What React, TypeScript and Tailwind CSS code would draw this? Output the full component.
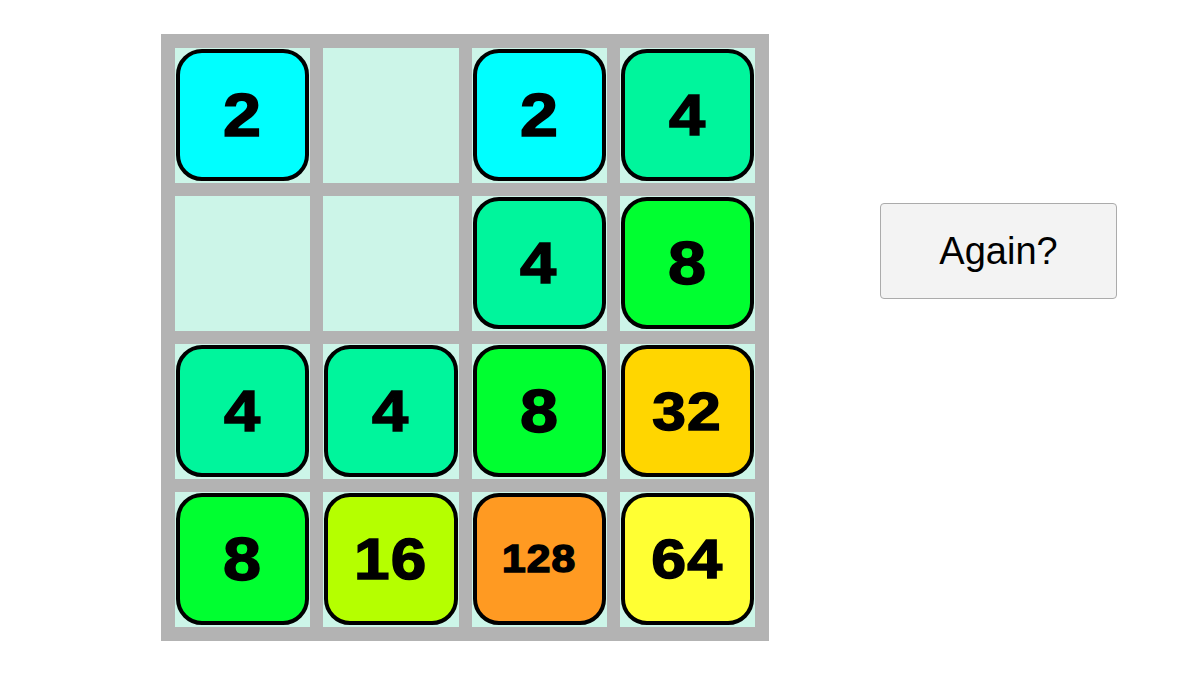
import React from 'react'

type Tile = { v: number | null }

const board: (number | null)[][] = [
  [2, null, 2, 4],
  [null, null, 4, 8],
  [4, 4, 8, 32],
  [8, 16, 128, 64],
]

const tileBg: Record<number, string> = {
  2: 'bg-[#00ffff]',
  4: 'bg-[#00f59c]',
  8: 'bg-[#00ff30]',
  16: 'bg-[#b5ff00]',
  32: 'bg-[#ffd600]',
  64: 'bg-[#ffff33]',
  128: 'bg-[#ff9a22]',
}

const tileText: Record<number, string> = {
  2: 'text-[61px]',
  4: 'text-[58px]',
  8: 'text-[61px]',
  16: 'text-[57px]',
  32: 'text-[54px]',
  64: 'text-[56px]',
  128: 'text-[38px]',
}

function Cell({ v }: Tile) {
  return (
    <div className="bg-[#ccf5e8] h-[135px] flex">
      {v != null && (
        <div
          className={`${tileBg[v]} ${tileText[v]} m-[1px] mb-[2px] flex-1 flex items-center justify-center rounded-[26px] border-[4px] border-black font-bold text-black leading-none`}
          style={{ fontFamily: '"Liberation Sans", Arial, sans-serif' }}
        >
          <span className="inline-block scale-x-[1.12] tracking-[1px] [-webkit-text-stroke:1.5px_black]">{v}</span>
        </div>
      )}
    </div>
  )
}

export default function App() {
  return (
    <div className="min-h-screen bg-white flex items-start pl-[161px] pt-[34px]">
      <div className="w-[608px] bg-[#b3b3b3] p-[14px] grid grid-cols-4 gap-[13px]">
        {board.flat().map((v, i) => (
          <Cell key={i} v={v} />
        ))}
      </div>
      <button
        type="button"
        className="ml-[111px] mt-[169px] w-[237px] h-[96px] rounded-[4px] border border-[#ababab] bg-[#f3f3f3] text-[38px] text-black"
        style={{ fontFamily: '"Liberation Sans", Arial, sans-serif' }}
      >
        Again?
      </button>
    </div>
  )
}
